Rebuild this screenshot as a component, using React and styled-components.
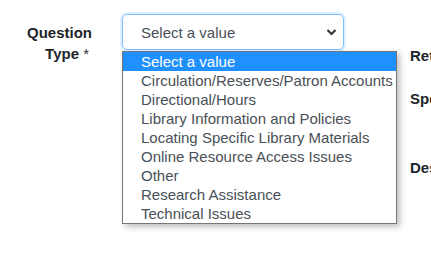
import React from "react";
import styled, { createGlobalStyle } from "styled-components";

const GlobalStyle = createGlobalStyle`
  body {
    margin: 0;
    background: #fff;
    font-family: "Liberation Sans", Arial, sans-serif;
    overflow: hidden;
  }
`;

const Page = styled.div`
  width: 431px;
  height: 261px;
  display: flex;
  padding-top: 14px;
  box-sizing: border-box;
  overflow: hidden;
`;

const Field = styled.div`
  display: flex;
  align-items: flex-start;
`;

const Label = styled.label`
  width: 92px;
  padding-top: ${(p) => p.$top || 0}px;
  text-align: right;
  font-size: 15px;
  font-weight: 700;
  line-height: 21px;
  color: #212529;
  flex-shrink: 0;
`;

const Star = styled.span`
  font-weight: 400;
  color: #333;
  margin-right: 3px;
`;

const SelectWrap = styled.div`
  position: relative;
  margin-left: 30px;
  width: 222px;
`;

const SelectBox = styled.div`
  height: 36px;
  box-sizing: border-box;
  border: 1px solid #80bdff;
  border-radius: 5px;
  box-shadow: 0 0 0 2px rgba(0, 123, 255, 0.12);
  display: flex;
  align-items: center;
  justify-content: space-between;
  padding: 0 6px 0 18px;
  font-size: 15px;
  color: #495057;
`;

const Menu = styled.ul`
  position: absolute;
  top: 37px;
  left: 0;
  width: 273px;
  margin: 0;
  padding: 0;
  list-style: none;
  background: #fff;
  border: 1px solid #767676;
  box-shadow: 3px 3px 6px rgba(0, 0, 0, 0.25);
  z-index: 5;
`;

const Option = styled.li`
  height: 19px;
  line-height: 19px;
  padding-left: 18px;
  font-size: 15px;
  white-space: nowrap;
  color: ${(p) => (p.$active ? "#fff" : "#495057")};
  background: ${(p) => (p.$active ? "#1e90ff" : "transparent")};
`;

const SideColumn = styled.div`
  display: flex;
  flex-direction: column;
  margin-left: 66px;
`;

const SideLabel = styled.div`
  margin-top: ${(p) => p.$top}px;
  font-size: 15px;
  font-weight: 700;
  line-height: 21px;
  color: #212529;
  white-space: nowrap;
`;

const options = [
  "Select a value",
  "Circulation/Reserves/Patron Accounts",
  "Directional/Hours",
  "Library Information and Policies",
  "Locating Specific Library Materials",
  "Online Resource Access Issues",
  "Other",
  "Research Assistance",
  "Technical Issues",
];

const Chevron = () => (
  <svg width="11" height="8" viewBox="0 0 11 8">
    <path d="M1.5 2 L5.5 6 L9.5 2" fill="none" stroke="#343a40" strokeWidth="2.2" />
  </svg>
);

const App = () => {
  return (
    <>
      <GlobalStyle />
      <Page>
        <Field>
          <Label $top={8}>
            Question
            <br />
            Type <Star>*</Star>
          </Label>
          <SelectWrap>
            <SelectBox>
              <span>Select a value</span>
              <Chevron />
            </SelectBox>
            <Menu>
              {options.map((o, i) => (
                <Option key={o} $active={i === 0}>
                  {o}
                </Option>
              ))}
            </Menu>
          </SelectWrap>
        </Field>
        <SideColumn>
          <SideLabel $top={31}>Return Email</SideLabel>
          <SideLabel $top={22}>Specify</SideLabel>
          <SideLabel $top={48}>Description</SideLabel>
        </SideColumn>
      </Page>
    </>
  );
};

export default App;
